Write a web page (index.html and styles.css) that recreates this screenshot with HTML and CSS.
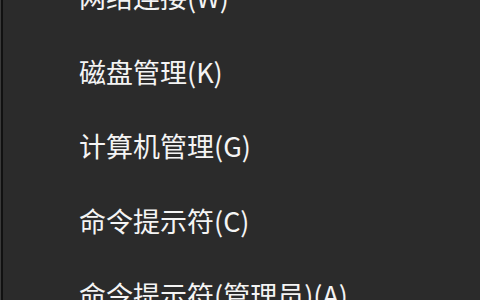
FILE: index.html
```html
<!DOCTYPE html>
<html lang="zh-CN">
<head>
  <meta charset="UTF-8" />
  <meta name="viewport" content="width=device-width, initial-scale=1.0" />
  <title>Win+X 菜单</title>
  <link rel="stylesheet" href="styles.css">
</head>
<body>
  <div class="menu">
    <ul class="menu-list">
      <li>网络连接(W)</li>
      <li>磁盘管理(K)</li>
      <li>计算机管理(G)</li>
      <li>命令提示符(C)</li>
      <li>命令提示符(管理员)(A)</li>
    </ul>
  </div>
</body>
</html>
```

FILE: styles.css
```css
html, body {
  margin: 0;
  padding: 0;
  height: 100%;
  overflow: hidden;
  background: #2b2b2b;
}

.menu {
  display: flow-root;
  height: 300px;
  overflow: hidden;
  background: #2b2b2b;
  border-left: 1px solid #3a3a3a;
  box-shadow: inset 2px 0 0 #111;
  font-family: "Microsoft YaHei", "Noto Sans CJK SC", sans-serif;
  color: #f4f4f4;
}

.menu-list {
  list-style: none;
  margin: -40px 0 0;
  padding: 0 0 0 78px;
}

.menu-list li {
  font-size: 27px;
  line-height: 74.5px;
  height: 74.5px;
  white-space: nowrap;
}
```
